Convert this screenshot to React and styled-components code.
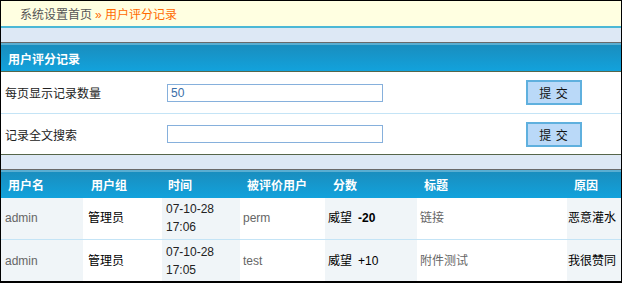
import React from "react";
import styled, { createGlobalStyle } from "styled-components";

const GlobalStyle = createGlobalStyle`
  html, body {
    margin: 0;
    padding: 0;
    background: #fff;
  }
  body {
    font-family: "Liberation Sans", "Noto Sans CJK SC", sans-serif;
    font-size: 12px;
  }
`;

const Frame = styled.div`
  width: 620px;
  border: 1px solid #000;
  background: #fff;
`;

const Breadcrumb = styled.div`
  height: 25px;
  display: flex;
  align-items: center;
  padding-left: 19px;
  background: #ffffe1;
  border-bottom: 2px solid #4cb8d6;
  color: #555;
  font-size: 12px;
`;

const Crumb = styled.span`
  color: #ff6a00;
  margin-left: ${(p) => (p.$gap ? "3px" : "0")};
`;

const Band = styled.div`
  height: 14px;
  background: #dde8f5;
`;

const BlueBar = styled.div`
  height: 26px;
  border-top: 1px solid #6a6a6a;
  box-shadow: inset 0 2px 0 #5aaed2;
  border-bottom: 1px solid #56664a;
  background: linear-gradient(#1a8cbc, #12a2dc);
  color: #fff;
  font-weight: bold;
  display: flex;
  align-items: center;
  padding: 2px 0 0 7px;
`;

const FormRow = styled.div`
  display: grid;
  grid-template-columns: 162px 359px 56px;
  align-items: center;
  height: ${(p) => p.$h}px;
  padding-left: 4px;
  border-bottom: 1px solid ${(p) => (p.$last ? "#56664a" : "#c4e4f6")};
  color: #222;
`;

const TextInput = styled.input`
  box-sizing: border-box;
  width: 216px;
  height: 18px;
  border: 1px solid #86b0dc;
  padding: 0 3px;
  font-family: "Liberation Sans", "Noto Sans CJK SC", sans-serif;
  font-size: 12px;
  color: #3a6ea8;
  outline: none;
`;

const SubmitButton = styled.button`
  box-sizing: border-box;
  width: 56px;
  height: 25px;
  border: 2px solid #5fb0de;
  background: #bad9f8;
  font-family: "Noto Sans CJK SC", sans-serif;
  font-size: 12px;
  color: #111;
  padding: 0;
  letter-spacing: 1px;
  cursor: pointer;
`;

const Table = styled.table`
  width: 620px;
  border-collapse: collapse;
  table-layout: fixed;
`;

const Col = styled.col`
  width: ${(p) => p.$w}px;
`;

const HeadRow = styled.tr`
  height: 28px;
  background: linear-gradient(#1a8cbc, #12a2dc);
  box-shadow: inset 0 2px 0 #5aaed2;
`;

const Th = styled.th`
  border-top: 1px solid #6a6a6a;
  text-align: left;
  color: #fff;
  font-weight: bold;
  font-size: 12px;
  white-space: nowrap;
  padding: 2px 0 0 ${(p) => p.$pl || 8}px;
`;

const Tr = styled.tr`
  height: 42px;
  border-bottom: 1px solid ${(p) => (p.$last ? "#000" : "#c4e4f6")};
`;

const Td = styled.td`
  background: ${(p) => (p.$alt ? "#f0f5f8" : "#fff")};
  color: ${(p) => p.$color || "#666"};
  padding: 0 0 0 ${(p) => p.$pl || 4}px;
  line-height: 18px;
  font-size: 12px;
  white-space: nowrap;
  vertical-align: middle;
`;

const Score = styled.span`
  margin-left: 6px;
  font-weight: ${(p) => (p.$bold ? "bold" : "normal")};
`;

const columns = [
  { label: "用户名", w: 82, pl: 7 },
  { label: "用户组", w: 79 },
  { label: "时间", w: 78, pl: 6 },
  { label: "被评价用户", w: 85, pl: 7 },
  { label: "分数", w: 92, pl: 8 },
  { label: "标题", w: 150, pl: 7 },
  { label: "原因", w: 54, pl: 7 },
];

const records = [
  { user: "admin", group: "管理员", date: "07-10-28", time: "17:06", target: "perm", score: "-20", bold: true, title: "链接", reason: "恶意灌水" },
  { user: "admin", group: "管理员", date: "07-10-28", time: "17:05", target: "test", score: "+10", bold: false, title: "附件测试", reason: "我很赞同" },
];

export default function App() {
  return (
    <>
      <GlobalStyle />
      <Frame>
        <Breadcrumb>
          系统设置首页
          <Crumb $gap>» 用户评分记录</Crumb>
        </Breadcrumb>
        <Band />
        <BlueBar>用户评分记录</BlueBar>
        <FormRow $h={41}>
          <span>每页显示记录数量</span>
          <TextInput defaultValue="50" />
          <SubmitButton>提 交</SubmitButton>
        </FormRow>
        <FormRow $h={40} $last>
          <span>记录全文搜索</span>
          <TextInput />
          <SubmitButton>提 交</SubmitButton>
        </FormRow>
        <Band />
        <Table>
          <colgroup>
            {columns.map((c) => (
              <Col key={c.label} $w={c.w} />
            ))}
          </colgroup>
          <thead>
            <HeadRow>
              {columns.map((c) => (
                <Th key={c.label} $pl={c.pl}>
                  {c.label}
                </Th>
              ))}
            </HeadRow>
          </thead>
          <tbody>
            {records.map((r, i) => (
              <Tr key={i} $last={i === records.length - 1}>
                <Td $alt>{r.user}</Td>
                <Td $color="#000" $pl={5}>{r.group}</Td>
                <Td $alt $color="#222">
                  {r.date}
                  <br />
                  {r.time}
                </Td>
                <Td $pl={3}>{r.target}</Td>
                <Td $alt $color="#000" $pl={3}>
                  威望<Score $bold={r.bold}>{r.score}</Score>
                </Td>
                <Td $pl={3}>{r.title}</Td>
                <Td $alt $color="#000" $pl={1}>{r.reason}</Td>
              </Tr>
            ))}
          </tbody>
        </Table>
      </Frame>
    </>
  );
}
